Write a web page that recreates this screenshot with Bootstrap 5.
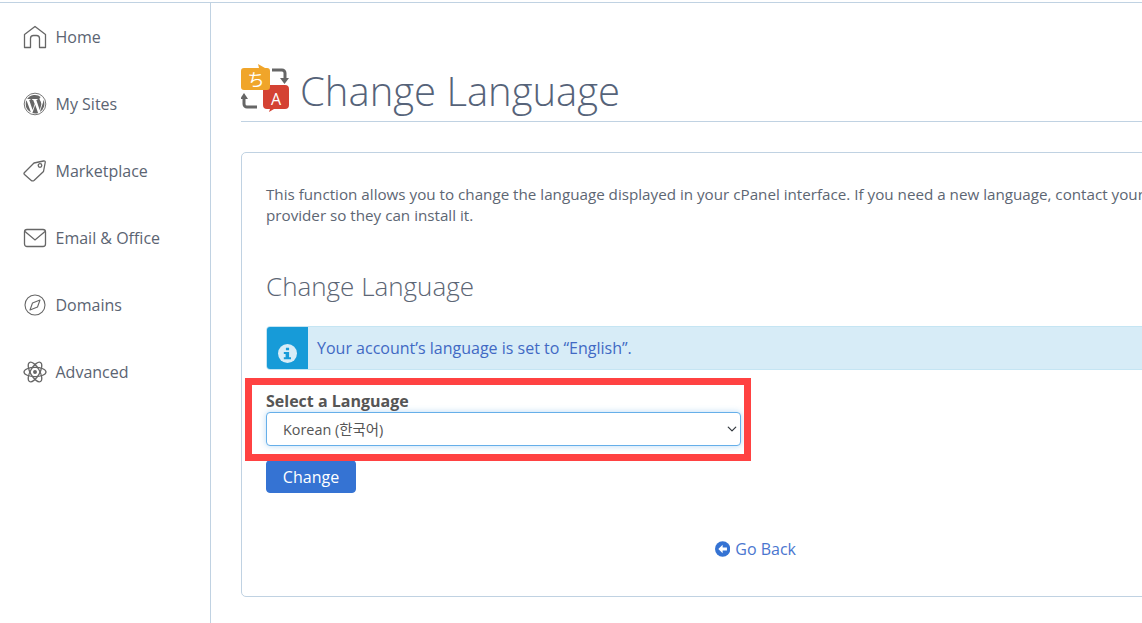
<!DOCTYPE html>
<html lang="en"><head><meta charset="utf-8"><title>Change Language</title>
<link href="https://cdn.jsdelivr.net/npm/bootstrap@5.3.0/dist/css/bootstrap.min.css" rel="stylesheet">
<style>
html,body{height:100%;overflow:hidden}
body{font-family:"Open Sans","Noto Sans CJK KR",sans-serif;color:#555;background:#fff}
.shell{height:623px;width:1300px;border-top:1px solid #c0d2e2;margin-top:2px}
.side{width:211px;flex:none;border-right:1px solid #c0d2e2}
.side-link{height:67px;padding-left:23px;gap:8.5px;color:#5b6472;font-size:16px;text-decoration:none;flex:none}
.side-link svg{flex:none;width:24px;height:24px;color:#666}
.main-col{width:1028px;margin-left:30px;flex:none}
.page-title{height:119px;border-bottom:1px solid #c0d2e2;gap:11px;padding-top:57px}
.page-title h1{font-size:40px;font-weight:300;color:#566379;margin:0;line-height:60px}
.title-ico{flex:none;margin-bottom:5px}
.panel-box{margin-top:30px;height:445px;border:1px solid #c0d2e2;border-radius:5px;padding:31px 24px 0;position:relative}
.intro{font-size:15.2px;line-height:21px;color:#5d6673;margin:0;width:1000px;white-space:nowrap}
.sub-title{font-size:26px;font-weight:300;color:#5c6675;line-height:36px;margin:42px 0 22px}
.note{height:44px;background:#d7ecf7;border:1px solid #c5e5f3;border-radius:4px;overflow:hidden;color:#4169c4;font-size:16px}
.note-ico{width:42px;background:#179bd8;margin:-1px 0 -1px -1px;padding-top:10px}
.note-text{margin-left:9px}
.lang-label{font-size:16px;font-weight:700;line-height:20px;margin:21px 0 1px;display:block;color:#555}
.lang-select{width:475px;height:34px;font-size:14.4px;padding:2px 0 0 16px;border-color:#66afe9;color:#555;box-shadow:0 0 6px rgba(102,175,233,.45);border-radius:4px;background-size:12px 10px;background-position:right 2px center;font-family:"Open Sans","Noto Sans CJK KR",sans-serif}
.go-btn{width:90px;height:33px;background:#3573d3;color:#fff;border:1px solid #3573d3;font-size:16px;padding:0;margin-top:14px;border-radius:4px}
.back-row{margin-top:44px;gap:5px;font-size:16px;color:#4a76cf;text-decoration:none;width:81px;margin-left:449px}
.red-frame{position:absolute;left:245px;top:378px;width:506px;height:83px;border:7px solid #ff4242;pointer-events:none}
</style></head>
<body>
<div class="shell d-flex">
  <nav class="side d-flex flex-column">
    <a class="side-link d-flex align-items-center" href="#"><svg viewBox="0 0 24 24" fill="none" stroke="currentColor" stroke-width="1.3"><path d="M1.5 22.5V9.5L12 1.5 22.500 9.500V22.500H16.500V13.500A3 3 0 0 0 13.500 10.500H10.500A3 3 0 0 0 7.500 13.500V22.500Z" stroke-linejoin="round"/></svg>Home</a>
    <a class="side-link d-flex align-items-center" href="#"><svg viewBox="0 0 24 24"><circle cx="12" cy="12" r="10.800" fill="none" stroke="currentColor" stroke-width=".9"/><path fill="currentColor" d="M2.700 12a9.300 9.300 0 0 0 5.200 8.300L3.500 8.200A9.300 9.300 0 0 0 2.700 12ZM18.200 11.500c0-1.200-.4-2-.8-2.600-.5-.8-.9-1.400-.9-2.100 0-.8.600-1.500 1.400-1.500h.1A9.300 9.300 0 0 0 4.100 7.100h.6c1 0 2.500-.1 2.500-.1.500 0 .6.700.1.800l-1.100.1 3.400 10.200 2.100-6.200-1.500-4-1-.1c-.5 0-.4-.8.1-.8 0 0 1.500.1 2.500.1s2.500-.1 2.500-.1c.5 0 .6.700.1.800l-1.100.1 3.400 10.100 1-3.100c.4-1.300.7-2.300.7-3.100ZM12.200 12.800 9.400 21a9.300 9.300 0 0 0 5.700-.1l-.1-.1ZM20.200 7.500l.1 1c0 .9-.2 2-.7 3.300l-2.800 8.200a9.300 9.300 0 0 0 3.400-12.500Z"/></svg>My Sites</a>
    <a class="side-link d-flex align-items-center" href="#"><svg viewBox="0 0 24 24" fill="none" stroke="currentColor" stroke-width="1.300" stroke-linejoin="round"><path d="M1.500 13.500 11 4 20.500 2Q22.500 1.600 22.200 3.500L20.500 12.500 11 21.500Q9.500 22.500 8 21.200L1.500 15.500Q.5 14.500 1.500 13.500Z"/><circle cx="17" cy="6.500" r="1.800"/></svg>Marketplace</a>
    <a class="side-link d-flex align-items-center" href="#"><svg viewBox="0 0 24 24" fill="none" stroke="currentColor" stroke-width="1.300"><rect x="1.500" y="3.500" width="21" height="17" rx="2.500"/><path d="M2 5.500 12 14 22 5.500"/></svg>Email &amp; Office</a>
    <a class="side-link d-flex align-items-center" href="#"><svg viewBox="0 0 24 24" fill="none" stroke="currentColor" stroke-width="1.100" stroke-linejoin="round"><circle cx="12" cy="12" r="10"/><path d="M17 7 14.500 14 7 17 9.500 10Z"/></svg>Domains</a>
    <a class="side-link d-flex align-items-center" href="#"><svg viewBox="0 0 24 24" fill="none" stroke="currentColor" stroke-width="1.300"><ellipse cx="12" cy="12" rx="11" ry="4.600"/><ellipse cx="12" cy="12" rx="11" ry="4.600" transform="rotate(60 12 12)"/><ellipse cx="12" cy="12" rx="11" ry="4.600" transform="rotate(120 12 12)"/><circle cx="12" cy="12" r="1.300" fill="currentColor"/></svg>Advanced</a>
  </nav>
  <main class="main-col">
    <div class="page-title d-flex align-items-center">
      <svg width="48" height="48" viewBox="0 0 48 48" class="title-ico">
        <path d="M31 6h10a3 3 0 0 1 3 3v6" fill="none" stroke="#666" stroke-width="3"/><path d="M39 14h9l-4.500 6Z" fill="#666"/>
        <path d="M16 43H6a3 3 0 0 1-3-3v-6" fill="none" stroke="#666" stroke-width="3"/><path d="M-1 35h8l-4-6Z" fill="#666"/>
        <path d="M22 21h22a4 4 0 0 1 4 4v16a4 4 0 0 1-4 4H33l-5 3 1-3h-3a4 4 0 0 1-4-4Z" fill="#d44233"/>
        <path d="M3 4h15l-1-4 7 4h2a3 3 0 0 1 3 3v16a3 3 0 0 1-3 3H3a3 3 0 0 1-3-3V7a3 3 0 0 1 3-3Z" fill="#f0a52a"/>
        <text x="15" y="22" font-size="17" fill="#fff" text-anchor="middle" font-family="Noto Sans CJK JP">ち</text>
        <text x="35" y="41" font-size="16" fill="#fff" text-anchor="middle" font-family="Open Sans">A</text>
      </svg>
      <h1>Change Language</h1>
    </div>
    <section class="panel-box">
      <p class="intro">This function allows you to change the language displayed in your cPanel interface. If you need a new language, contact your hosting<br>provider so they can install it.</p>
      <h2 class="sub-title">Change Language</h2>
      <div class="note d-flex align-items-center">
        <div class="note-ico align-self-stretch d-flex align-items-center justify-content-center">
          <svg width="19" height="19" viewBox="0 0 18 18"><circle cx="9" cy="9" r="9" fill="#d7ecf7"/><path d="M7.500 3.500h3v2.500h-3ZM5.500 7.500h5v5h1.800v2H5.500v-2h1.700v-3H5.500Z" fill="#179bd8"/></svg>
        </div>
        <span class="note-text">Your account’s language is set to “English”.</span>
      </div>
      <form>
        <label class="lang-label" for="lang">Select a Language</label>
        <select id="lang" class="form-select lang-select"><option>Korean (한국어)</option></select>
        <button type="button" class="btn go-btn d-block">Change</button>
      </form>
      <a href="#" class="back-row d-flex align-items-center text-nowrap">
        <svg width="16" height="16" viewBox="0 0 16 16" class="flex-none"><circle cx="8" cy="8" r="8" fill="#3573d3"/><path d="M8 3.500 3.500 8 8 12.500V9.700h4.500V6.300H8Z" fill="#fff"/></svg>Go Back</a>
    </section>
  </main>
</div>
<div class="red-frame"></div>
</body></html>
